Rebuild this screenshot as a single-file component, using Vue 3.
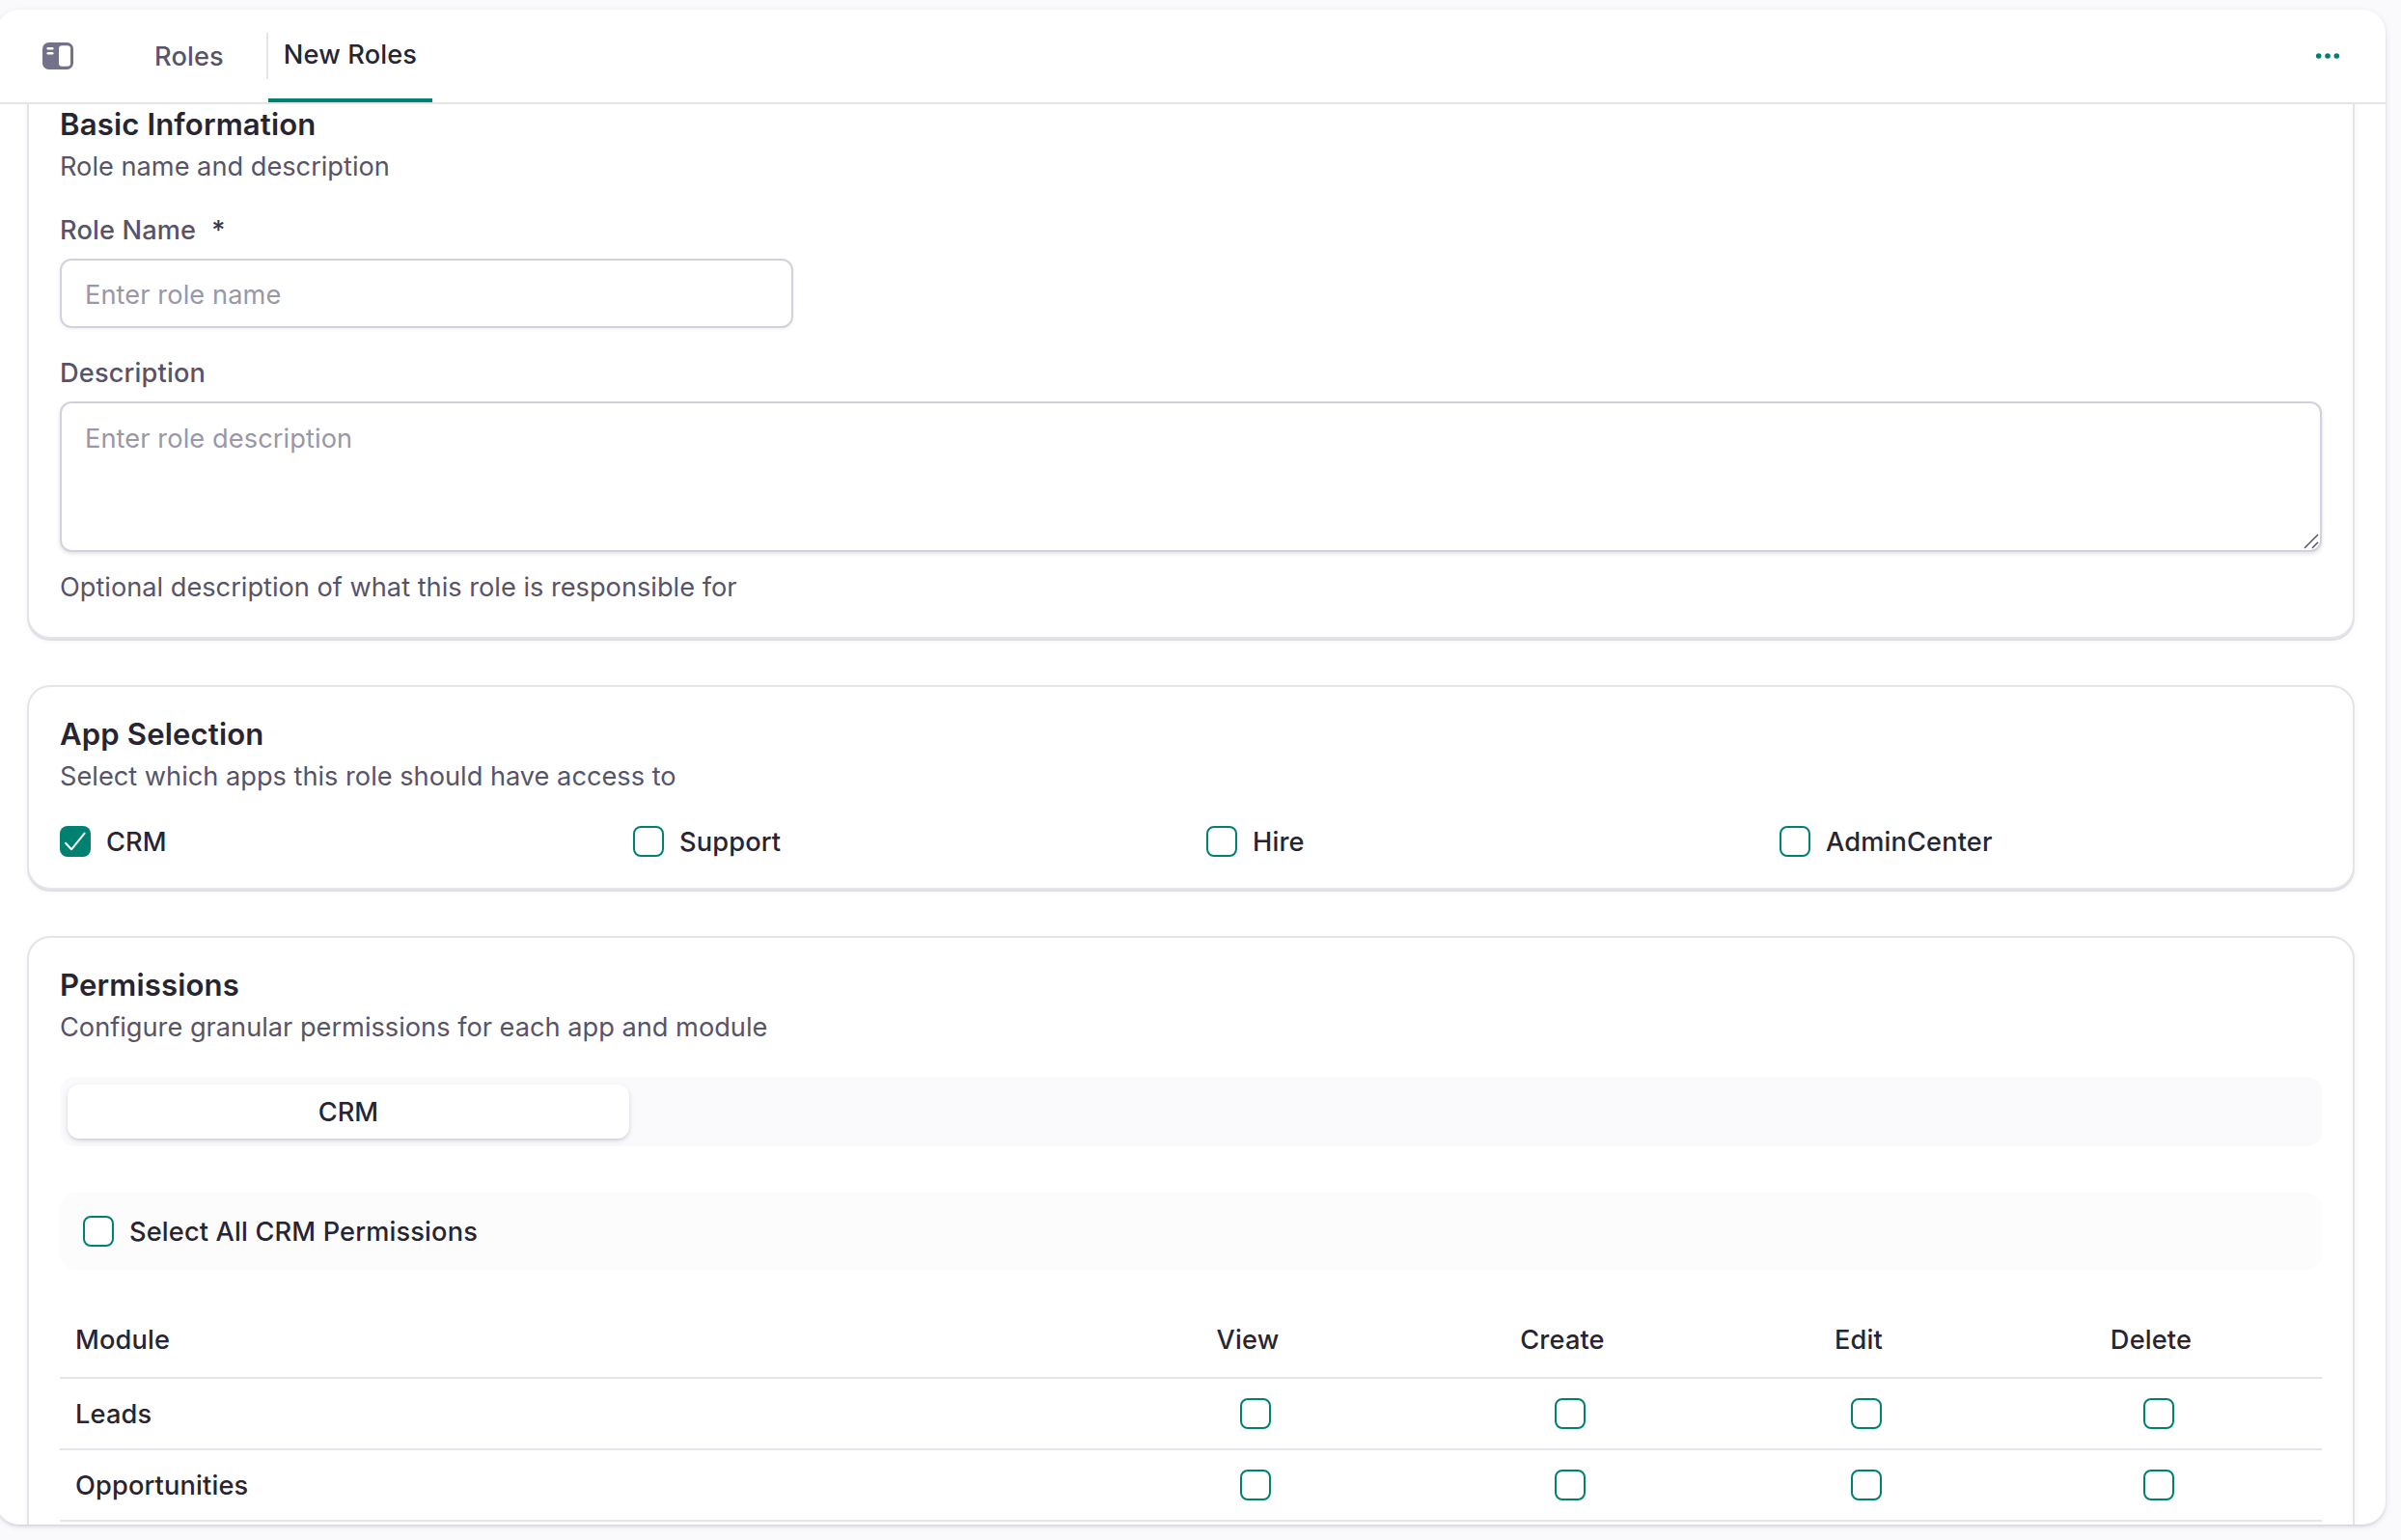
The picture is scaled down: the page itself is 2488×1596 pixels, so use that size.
<template>
  <div class="app-shell">
    <div class="panel">
      <!-- Top bar -->
      <header class="top-bar">
        <button class="icon-button" type="button" aria-label="Toggle sidebar">
          <svg width="32" height="28" viewBox="0 0 32 28">
            <rect width="32" height="28" rx="6.5" fill="#74728a" />
            <rect x="17" y="3.3" width="12" height="21.4" rx="3.2" fill="#fff" />
            <rect x="4.5" y="5" width="7" height="2.4" rx="1.2" fill="#fff" />
            <rect x="4.5" y="10" width="7" height="2.4" rx="1.2" fill="#fff" />
          </svg>
        </button>
        <nav class="tabs">
          <a class="tab">Roles</a>
          <span class="tab-divider"></span>
          <a class="tab tab-active">New Roles</a>
        </nav>
        <button class="icon-button more" type="button" aria-label="More">
          <svg width="26" height="8" viewBox="0 0 26 8" fill="#008071">
            <circle cx="3.7" cy="4" r="2.8" />
            <circle cx="13" cy="4" r="2.8" />
            <circle cx="22.3" cy="4" r="2.8" />
          </svg>
        </button>
      </header>

      <main class="scroll-area">
        <form class="role-form" @submit.prevent>
          <!-- Basic information -->
          <section class="card">
            <div class="card-header">
              <h2 class="card-title">Basic Information</h2>
              <p class="card-text">Role name and description</p>
            </div>
            <div class="field">
              <label class="field-label" for="role-name">
                Role Name<span class="required">*</span>
              </label>
              <input
                id="role-name"
                v-model="form.name"
                class="input"
                type="text"
                placeholder="Enter role name"
              />
            </div>
            <div class="field">
              <label class="field-label" for="role-description">Description</label>
              <div class="textarea-wrap">
                <textarea
                  id="role-description"
                  v-model="form.description"
                  class="input textarea"
                  placeholder="Enter role description"
                ></textarea>
                <svg class="grip" width="16" height="16" viewBox="0 0 16 16">
                  <path
                    d="M1 15 15 1M9 15l6-6"
                    stroke="#55536b"
                    stroke-width="1.5"
                    fill="none"
                  />
                </svg>
              </div>
              <p class="card-text">
                Optional description of what this role is responsible for
              </p>
            </div>
          </section>

          <!-- App selection -->
          <section class="card">
            <div class="card-header">
              <h2 class="card-title">App Selection</h2>
              <p class="card-text">Select which apps this role should have access to</p>
            </div>
            <div class="app-grid">
              <label v-for="app in apps" :key="app.id" class="check-label">
                <input v-model="app.selected" class="checkbox-input" type="checkbox" />
                <span class="checkbox" :class="{ checked: app.selected }">
                  <svg v-if="app.selected" width="32" height="32" viewBox="0 0 32 32">
                    <path
                      d="M6 17.8 12 24.3 25.6 7.6"
                      fill="none"
                      stroke="#fff"
                      stroke-width="2"
                      stroke-linecap="round"
                      stroke-linejoin="round"
                    />
                  </svg>
                </span>
                <span class="check-text">{{ app.label }}</span>
              </label>
            </div>
          </section>

          <!-- Permissions -->
          <section class="card">
            <div class="card-header">
              <h2 class="card-title">Permissions</h2>
              <p class="card-text">
                Configure granular permissions for each app and module
              </p>
            </div>
            <div class="segmented">
              <button
                v-for="app in selectedApps"
                :key="app.id"
                class="segment"
                type="button"
              >
                {{ app.label }}
              </button>
            </div>
            <label class="check-label select-all">
              <input v-model="allSelected" class="checkbox-input" type="checkbox" />
              <span class="checkbox" :class="{ checked: allSelected }"></span>
              <span class="check-text">Select All CRM Permissions</span>
            </label>
            <table class="permission-table">
              <colgroup>
                <col />
                <col class="col-view" />
                <col class="col-create" />
                <col class="col-edit" />
                <col class="col-delete" />
              </colgroup>
              <thead>
                <tr>
                  <th class="cell-module">Module</th>
                  <th v-for="action in actions" :key="action">{{ action }}</th>
                </tr>
              </thead>
              <tbody>
                <tr v-for="mod in modules" :key="mod.name">
                  <td class="cell-module">{{ mod.name }}</td>
                  <td v-for="action in actions" :key="action" class="cell-check">
                    <label class="cell-toggle">
                      <input
                        v-model="mod.granted"
                        class="checkbox-input"
                        type="checkbox"
                        :value="action"
                      />
                      <span
                        class="checkbox"
                        :class="{ checked: mod.granted.includes(action) }"
                      ></span>
                    </label>
                  </td>
                </tr>
              </tbody>
            </table>
          </section>
        </form>
      </main>
    </div>
  </div>
</template>

<script setup>
import { ref, computed } from 'vue'

const form = ref({ name: '', description: '' })

const apps = ref([
  { id: 'crm', label: 'CRM', selected: true },
  { id: 'support', label: 'Support', selected: false },
  { id: 'hire', label: 'Hire', selected: false },
  { id: 'admin', label: 'AdminCenter', selected: false }
])

const selectedApps = computed(() => apps.value.filter((app) => app.selected))

const actions = ['View', 'Create', 'Edit', 'Delete']

const modules = ref([
  { name: 'Leads', granted: [] },
  { name: 'Opportunities', granted: [] }
])

const allSelected = computed({
  get: () => modules.value.every((mod) => mod.granted.length === actions.length),
  set: (on) => {
    modules.value.forEach((mod) => {
      mod.granted = on ? [...actions] : []
    })
  }
})
</script>

<style>
body {
  margin: 0;
  overflow: hidden;
  background: #fafafc;
}
</style>

<style scoped>
.app-shell {
  box-sizing: border-box;
  height: 100vh;
  padding: 10px 16px 16px 0;
  overflow: hidden;
  background: #fafafc;
  color: #272532;
  font-family: Inter, 'Liberation Sans', sans-serif;
  font-size: 27.2px;
  line-height: 41px;
}

.app-shell *,
.app-shell *::before {
  box-sizing: border-box;
}

.panel {
  display: flex;
  flex-direction: column;
  height: 100%;
  margin-left: -4px;
  border-radius: 24px;
  background: #fff;
  box-shadow: 0 2px 6px rgba(0, 0, 0, 0.1), 0 2px 4px -2px rgba(30, 20, 90, 0.2);
  overflow: hidden;
}

/* top bar */
.top-bar {
  display: flex;
  flex: none;
  align-items: center;
  height: 98px;
  padding: 0 47px 0 48px;
  border-bottom: 2px solid #e4e4eb;
}

.icon-button {
  display: flex;
  padding: 0;
  border: 0;
  background: none;
}

.more {
  margin-left: auto;
}

.tabs {
  display: flex;
  align-items: center;
  align-self: stretch;
  margin-left: 84px;
  font-weight: 500;
  letter-spacing: 0.15px;
}

.tab {
  min-width: 72px;
  padding-top: 1px;
  color: #575469;
}

.tab-divider {
  width: 2px;
  height: 48px;
  margin-left: 44px;
  background: #e4e4eb;
}

.tab-active {
  display: flex;
  align-items: center;
  justify-content: center;
  align-self: stretch;
  width: 170px;
  border-bottom: 4px solid #008071;
  color: #272532;
}

/* cards */
.scroll-area {
  flex: 1;
  min-height: 0;
  overflow: hidden;
}

.role-form {
  display: flex;
  flex-direction: column;
  gap: 48px;
  margin: -30px 32px 0;
}

.card {
  display: flex;
  flex-direction: column;
  gap: 32px;
  padding: 32px;
  border: 2px solid #e4e4eb;
  border-radius: 24px;
  background: #fff;
  box-shadow: 0 2px 6px rgba(0, 0, 0, 0.05), 0 2px 0 #e6e6eb;
}

.card-header {
  display: flex;
  flex-direction: column;
  gap: 6px;
}

.card-title {
  margin: 0;
  font-size: 31.1px;
  font-weight: 600;
  line-height: 34px;
  letter-spacing: 0.15px;
}

.card-text {
  margin: 0 0 -1px;
  color: #575469;
}

/* fields */
.field {
  display: flex;
  flex-direction: column;
  gap: 16px;
}

.field-label {
  margin-bottom: -1px;
  color: #575469;
  font-weight: 500;
  line-height: 29px;
  letter-spacing: 0.15px;
}

.required {
  margin-left: 16px;
  color: #3b3947;
}

.input {
  display: block;
  width: 760px;
  height: 72px;
  margin: 0;
  padding: 3px 24px 0;
  border: 2px solid #d2d1df;
  border-radius: 12px;
  outline: none;
  background: #fff;
  box-shadow: 0 2px 4px rgba(0, 0, 0, 0.05);
  color: #272532;
  font: inherit;
  letter-spacing: 0.1px;
}

.input::placeholder {
  color: #9997a8;
  opacity: 1;
}

.textarea-wrap {
  position: relative;
}

.textarea {
  width: 100%;
  height: 156px;
  padding: 16px 24px;
  box-shadow: 0 2px 4px rgba(0, 0, 0, 0.12);
  resize: none;
}

.grip {
  position: absolute;
  right: 3px;
  bottom: 3px;
}

/* checkboxes */
.check-label {
  display: flex;
  align-items: center;
  gap: 16px;
  font-weight: 500;
  letter-spacing: 0.15px;
}

.check-text {
  margin-bottom: -1px;
  line-height: 33px;
}

.checkbox-input {
  position: absolute;
  width: 1px;
  height: 1px;
  margin: 0;
  opacity: 0;
}

.checkbox {
  display: block;
  flex: none;
  width: 32px;
  height: 32px;
  border: 2px solid #008071;
  border-radius: 8px;
  background: #fff;
}

.checkbox.checked {
  border: 0;
  background: #008071;
}

.checkbox svg {
  display: block;
}

.app-grid {
  display: grid;
  grid-template-columns: repeat(4, 1fr);
  gap: 32px;
}

/* permissions */
.segmented {
  display: grid;
  grid-template-columns: repeat(4, 1fr);
  height: 72px;
  padding: 8px;
  border-radius: 16px;
  background: #fafafc;
}

.segment {
  padding: 1px 0 0;
  border: 0;
  border-radius: 12px;
  background: #fff;
  box-shadow: 0 2px 6px rgba(0, 0, 0, 0.1), 0 2px 4px -2px rgba(30, 20, 90, 0.25);
  color: #272532;
  font: inherit;
  font-weight: 500;
}

.select-all {
  height: 80px;
  margin-top: 16px;
  padding: 0 24px;
  border-radius: 16px;
  background: #fcfcfd;
}

.permission-table {
  width: 100%;
  table-layout: fixed;
  border-collapse: separate;
  border-spacing: 0;
  font-weight: 500;
  letter-spacing: 0.15px;
}

.col-view {
  width: 290px;
}

.col-create {
  width: 362px;
}

.col-edit {
  width: 252px;
}

.col-delete {
  width: 354px;
}

.permission-table th {
  height: 81px;
  padding: 2px 16px 0;
  border-bottom: 2px solid #e4e4eb;
  font-weight: 500;
}

.permission-table td {
  height: 74px;
  padding: 0 16px;
  border-bottom: 2px solid #e4e4eb;
}

.permission-table .cell-module {
  text-align: left;
}

.permission-table td.cell-module {
  padding-top: 1px;
}

.permission-table .cell-check {
  padding-right: 0;
}

.cell-toggle {
  display: flex;
  justify-content: center;
}
</style>
